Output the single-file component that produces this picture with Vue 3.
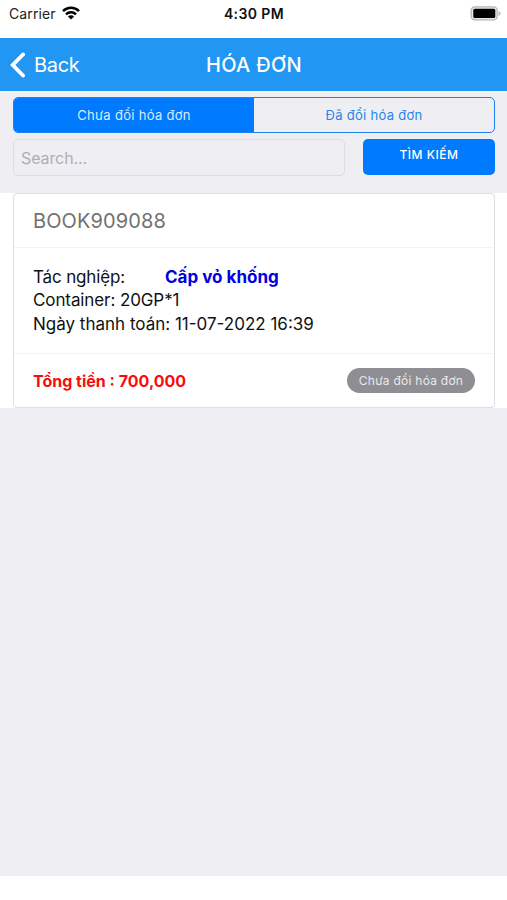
<script setup>
import { ref } from 'vue'

const tabs = ['Chưa đổi hóa đơn', 'Đã đổi hóa đơn']
const activeTab = ref(0)
const query = ref('')
const invoice = {
  code: 'BOOK909088',
  task: 'Cấp vỏ khống',
  container: '20GP*1',
  paidAt: '11-07-2022 16:39',
  total: '700,000',
  status: 'Chưa đổi hóa đơn',
}
</script>

<template>
  <div class="screen">
    <div class="status-bar">
      <div class="carrier">
        <span>Carrier</span>
        <svg class="wifi" viewBox="0 0 18 14" width="18" height="14">
          <g fill="none" stroke="#000" stroke-width="2.5">
            <path d="M1 5.1a11.3 11.3 0 0 1 16 0" />
            <path d="M4 8.3a7.1 7.1 0 0 1 10 0" />
          </g>
          <path d="M9 13.6 5.9 10.5a4.4 4.4 0 0 1 6.2 0z" />
        </svg>
      </div>
      <span class="clock">4:30 PM</span>
      <svg class="battery" viewBox="0 0 31 15" width="31" height="15">
        <rect x="1.2" y="0.8" width="26" height="13" rx="3.6" fill="#e9e9e7" stroke="#b5b5b3" stroke-width="1.3" />
        <rect x="3.3" y="2.7" width="22" height="9.2" rx="1.5" />
        <path d="M28.6 5v5c1.200-.4 2-1.300 2-2.500s-.8-2.100-2-2.500z" fill="#b5b5b3" />
      </svg>
    </div>

    <header class="nav">
      <button class="back">
        <svg viewBox="0 0 16 26" width="16" height="26">
          <path d="M14 2.500 3.800 13 14 23.500" fill="none" stroke="#fff" stroke-width="3.900" stroke-linecap="round" />
        </svg>
        <span>Back</span>
      </button>
      <h1>HÓA ĐƠN</h1>
    </header>

    <section class="filters">
      <div class="segments">
        <button
          v-for="(tab, i) in tabs"
          :key="tab"
          class="segment"
          :class="{ active: activeTab === i }"
          @click="activeTab = i"
        ><span>{{ tab }}</span></button>
      </div>
      <div class="search-row">
        <input v-model="query" class="search" placeholder="Search..." />
        <button class="submit">TÌM KIẾM</button>
      </div>
    </section>

    <main class="list">
      <article class="card">
        <div class="card-head"><span>{{ invoice.code }}</span></div>
        <div class="card-body">
          <div class="line"><span class="label">Tác nghiệp:</span><b class="task">{{ invoice.task }}</b></div>
          <div class="line container">Container: {{ invoice.container }}</div>
          <div class="line">Ngày thanh toán: {{ invoice.paidAt }}</div>
        </div>
        <div class="card-foot">
          <b class="total">Tổng tiền : {{ invoice.total }}</b>
          <span class="badge"><span>{{ invoice.status }}</span></span>
        </div>
      </article>
    </main>

    <div class="rest"></div>
    <footer class="home-area"></footer>
  </div>
</template>

<style>
body {
  margin: 0;
}
</style>

<style scoped>
.screen {
  display: flex;
  flex-direction: column;
  height: 900px;
  overflow: hidden;
  background: #efeef3;
  color: #111;
  font-family: Inter, "Noto Sans", sans-serif;
}
.screen * {
  box-sizing: border-box;
}
button,
input {
  margin: 0;
  padding: 0;
  border: 0;
  font-family: inherit;
}
.status-bar {
  display: grid;
  grid-template-columns: 1fr auto 1fr;
  align-items: center;
  height: 38px;
  padding: 0 6px 11px 9px;
  background: #fff;
  flex: none;
}
.carrier {
  display: flex;
  align-items: center;
  gap: 6px;
  color: #222;
  font-size: 14px;
  letter-spacing: 0.1px;
}
.wifi {
  margin-top: -2px;
}
.clock {
  margin-left: -2px;
  font-size: 14px;
  font-weight: 600;
  letter-spacing: 0.4px;
}
.battery {
  justify-self: end;
  margin-top: -1px;
}
.nav {
  display: grid;
  grid-template-columns: 1fr auto 1fr;
  align-items: center;
  height: 53px;
  padding: 0 8px 0 9px;
  background: #2196f3;
  color: #fff;
  flex: none;
}
.back {
  display: flex;
  align-items: center;
  gap: 9px;
  background: none;
  color: #fff;
  font-size: 20px;
  letter-spacing: -0.3px;
}
.nav h1 {
  margin: 0;
  font-size: 20px;
  font-weight: 500;
  letter-spacing: 0.3px;
}
.filters {
  height: 102px;
  padding: 6px 12px 0 13px;
  flex: none;
}
.segments {
  display: flex;
  height: 36px;
  border: 1px solid #1d82f2;
  border-radius: 5px;
  overflow: hidden;
}
.segment {
  flex: 1;
  background: transparent;
  color: #2686eb;
  font-size: 13px;
  letter-spacing: 0.3px;
}
.segment.active {
  background: #007aff;
  color: #d9ebff;
}
.search-row {
  display: flex;
  gap: 18px;
  margin-top: 6px;
}
.search {
  width: 332px;
  height: 37px;
  padding: 0 7px;
  border: 1px solid #dddde1;
  border-radius: 5px;
  background: transparent;
  font-size: 16px;
  letter-spacing: -0.1px;
  outline: none;
}
.search::placeholder {
  color: #aeaeb3;
  opacity: 1;
}
.submit {
  flex: 1;
  height: 36px;
  padding-bottom: 5px;
  border-radius: 5px;
  background: #007aff;
  color: #fff;
  font-size: 12px;
  font-weight: 500;
  letter-spacing: 0.5px;
}
.list {
  height: 215px;
  padding: 0 12px 0 13px;
  background: #fff;
  flex: none;
}
.card {
  height: 215px;
  border: 1px solid #dedee3;
  border-radius: 4px;
}
.card-head {
  display: flex;
  align-items: center;
  height: 54px;
  padding: 1px 0 0 19px;
  border-bottom: 1px solid #f3f3f4;
  color: #727272;
  font-size: 20px;
  letter-spacing: 0.12px;
}
.card-body {
  height: 106px;
  padding: 18px 19px 0;
  border-bottom: 1px solid #f3f3f4;
  font-size: 17px;
  line-height: 23.300px;
}
.line {
  display: flex;
  white-space: nowrap;
}
.label {
  width: 132px;
  letter-spacing: -0.15px;
}
.container {
  letter-spacing: -0.1px;
}
.task {
  color: #0000e0;
  font-weight: 700;
}
.card-foot {
  display: flex;
  align-items: center;
  justify-content: space-between;
  height: 53px;
  padding: 0 19px;
}
.total {
  color: #f80d0d;
  font-size: 16px;
}
.badge {
  display: flex;
  align-items: center;
  justify-content: center;
  width: 128px;
  height: 25px;
  border-radius: 13px;
  background: #8e8e93;
  color: #e9e9ec;
  font-size: 12px;
  letter-spacing: 0.25px;
}
.rest {
  flex: 1;
}
.home-area {
  height: 24px;
  background: #fff;
  flex: none;
}
</style>
